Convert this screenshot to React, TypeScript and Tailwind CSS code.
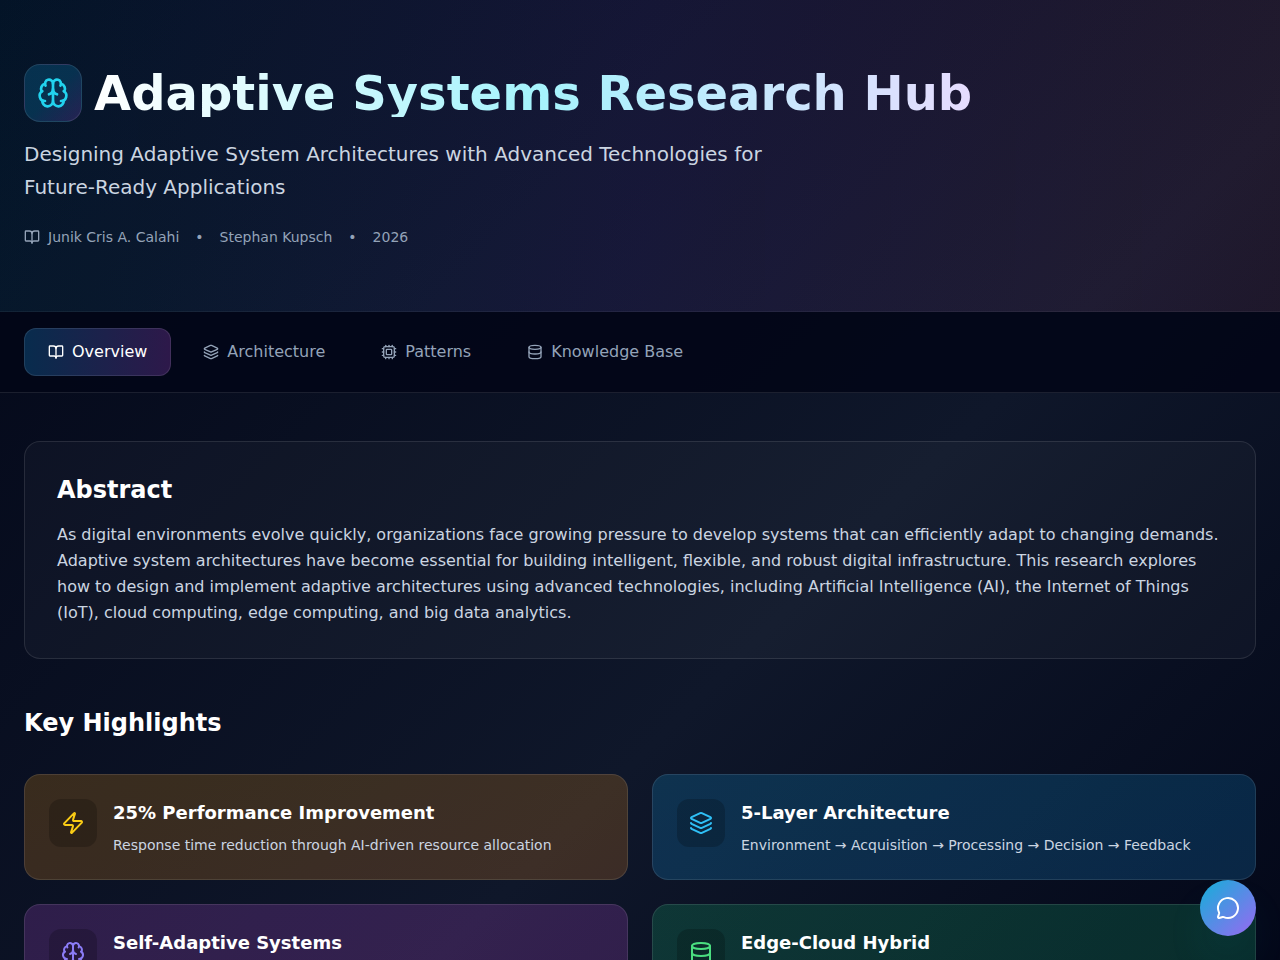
import { useState } from "react";
import {
  BookOpen,
  Brain,
  Cpu,
  Database,
  Layers,
  MessageCircle,
  Zap,
} from "lucide-react";

const tabs = [
  { id: "overview", label: "Overview", icon: BookOpen },
  { id: "architecture", label: "Architecture", icon: Layers },
  { id: "patterns", label: "Patterns", icon: Cpu },
  { id: "knowledge", label: "Knowledge Base", icon: Database },
];

const highlights = [
  {
    title: "25% Performance Improvement",
    description: "Response time reduction through AI-driven resource allocation",
    icon: Zap,
    iconColor: "text-[#facc15]",
    background: "from-[#f59e0b]/20 to-[#f58a20]/20",
  },
  {
    title: "5-Layer Architecture",
    description:
      "Environment → Acquisition → Processing → Decision → Feedback",
    icon: Layers,
    iconColor: "text-[#2fc0f6]",
    background: "from-[#0ea5e9]/20 to-[#1d9bf0]/20",
  },
  {
    title: "Self-Adaptive Systems",
    icon: Brain,
    iconColor: "text-[#8b7cf6]",
    background: "from-[#c050e8]/20 to-[#c94ee0]/20",
  },
  {
    title: "Edge-Cloud Hybrid",
    icon: Database,
    iconColor: "text-[#4ade80]",
    background: "from-[#16c074]/20 to-[#1fc27a]/20",
  },
];

export default function App() {
  const [activeTab, setActiveTab] = useState("overview");

  return (
    <div className="min-h-screen bg-linear-135/srgb from-[#020617] via-[#0f172a] via-60% to-[#020617] font-['DejaVu_Sans',sans-serif] text-white">
      <header className="border-b border-white/5 bg-linear-to-r/srgb from-[#0ea5c9]/9 via-[#8b5cf6]/10 to-[#ec4860]/8">
        <div className="mx-auto max-w-7xl px-6 py-16">
          <div className="mb-4 flex items-center gap-3">
            <div className="rounded-2xl border border-white/10 bg-linear-to-br/srgb from-[#0ea5e9]/20 via-[#0ea5e9]/20 to-[#a855f7]/20 p-3">
              <Brain className="size-8 text-[#22d3ee]" />
            </div>
            <h1 className="bg-linear-to-r/srgb from-white via-[#a5f3fc] to-[#e6dcfe] bg-clip-text text-5xl leading-none font-bold text-transparent">
              Adaptive Systems Research Hub
            </h1>
          </div>
          <p className="mb-6 max-w-3xl text-xl leading-relaxed text-[#cbd5e1]">
            Designing Adaptive System Architectures with Advanced Technologies
            for Future-Ready Applications
          </p>
          <div className="flex items-center gap-4 text-sm text-[#94a3b8]">
            <span className="flex items-center gap-2">
              <BookOpen className="size-4" />
              Junik Cris A. Calahi
            </span>
            <span>•</span>
            <span>Stephan Kupsch</span>
            <span>•</span>
            <span>2026</span>
          </div>
        </div>
      </header>

      <nav className="sticky top-0 z-10 border-b border-white/10 bg-[#020617]/90">
        <div className="mx-auto flex max-w-7xl gap-2 px-6 py-4">
          {tabs.map((tab) => {
            const Icon = tab.icon;
            return (
              <button
                key={tab.id}
                onClick={() => setActiveTab(tab.id)}
                className={`flex items-center gap-2 rounded-xl px-6 py-3 ${
                  activeTab === tab.id
                    ? "bg-linear-to-r/srgb from-[#1a9df0]/25 to-[#b050e0]/25 text-white inset-ring inset-ring-white/10"
                    : "text-[#94a3b8] hover:text-white"
                }`}
              >
                <Icon className="size-4" />
                {tab.label}
              </button>
            );
          })}
        </div>
      </nav>

      <main className="mx-auto max-w-7xl px-6 py-12">
        <section className="mb-12 rounded-2xl border border-white/10 bg-white/3 p-8">
          <h2 className="mb-4 text-2xl font-bold">Abstract</h2>
          <p className="leading-relaxed text-[#cbd5e1]">
            As digital environments evolve quickly, organizations face growing
            pressure to develop systems that can efficiently adapt to changing
            demands. Adaptive system architectures have become essential for
            building intelligent, flexible, and robust digital infrastructure.
            This research explores how to design and implement adaptive
            architectures using advanced technologies, including Artificial
            Intelligence (AI), the Internet of Things (IoT), cloud computing,
            edge computing, and big data analytics.
          </p>
        </section>

        <section>
          <h2 className="mb-[35px] text-2xl font-bold">Key Highlights</h2>
          <div className="grid grid-cols-1 gap-6 md:grid-cols-2">
            {highlights.map((item) => {
              const Icon = item.icon;
              return (
                <div
                  key={item.title}
                  className={`flex items-start gap-4 rounded-2xl border border-white/10 bg-linear-to-br/srgb p-6 ${item.background}`}
                >
                  <div className="rounded-xl bg-black/20 p-3">
                    <Icon className={`size-6 ${item.iconColor}`} />
                  </div>
                  <div>
                    <h3 className="mb-2 text-lg font-semibold">{item.title}</h3>
                    {item.description && (
                      <p className="text-sm text-[#cbd5e1]">
                        {item.description}
                      </p>
                    )}
                  </div>
                </div>
              );
            })}
          </div>
        </section>
      </main>

      <button
        aria-label="Open chat"
        className="fixed right-6 bottom-6 z-20 rounded-full bg-linear-to-br/srgb from-[#12b0d8] to-[#9a68f2] p-4 shadow-2xl shadow-[#06b6d4]/20"
      >
        <MessageCircle className="size-6" />
      </button>
    </div>
  );
}
